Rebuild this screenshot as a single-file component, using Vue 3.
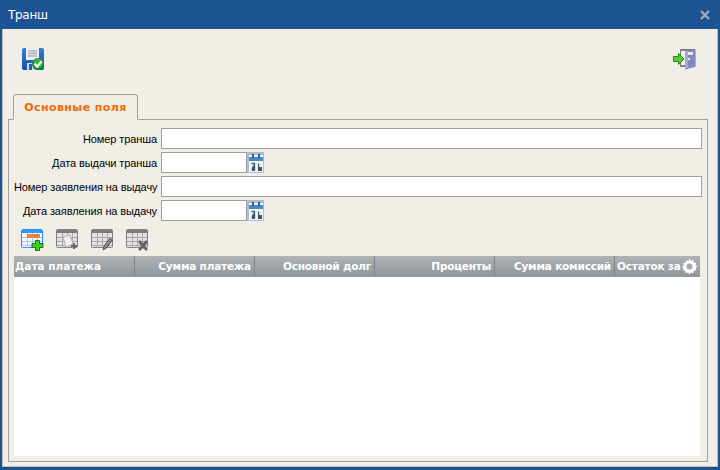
<template>
  <div class="window">
    <div class="titlebar">
      <span class="title">Транш</span>
      <svg class="close" width="10" height="10" viewBox="0 0 10 10">
        <path d="M1 1 L9 9 M9 1 L1 9" stroke="#a3adb9" stroke-width="2.2" fill="none" />
      </svg>
    </div>
    <div class="body">
      <div class="toolbar">
        <svg width="22" height="22" viewBox="0 0 22 22">
          <defs>
            <linearGradient id="disk" x1="0" y1="0" x2="0" y2="1">
              <stop offset="0" stop-color="#2f7fdc" />
              <stop offset="1" stop-color="#174f9f" />
            </linearGradient>
          </defs>
          <rect x="0" y="0" width="22" height="22" rx="2" fill="url(#disk)" />
          <rect x="4" y="0" width="13" height="12" fill="#eceef1" />
          <path d="M6 3h9M6 5.500h9M6 8h9" stroke="#a9b0bb" stroke-width="1.300" />
          <rect x="5" y="15" width="9" height="7" fill="#cfd8e6" />
          <rect x="7" y="16" width="3" height="6" fill="#2a5da3" />
          <circle cx="16" cy="16" r="6" fill="#10862a" />
          <circle cx="16" cy="15.500" r="4.800" fill="#35b53f" />
          <path d="M12.600 15.800 L15.200 18.600 L19.600 13.200" stroke="#fff" stroke-width="2.200" fill="none" />
        </svg>
        <svg width="23" height="22" viewBox="0 0 23 22">
          <path d="M7.500 1.500h14.500v17H7.500z" fill="#8c8c94" stroke="#77777f" />
          <rect x="8" y="3" width="5" height="14" fill="#eef1f2" />
          <path d="M12 3.500 L22 1.500 V19 L12 21.500 Z" fill="#8587bf" />
          <path d="M12 3.500 L15 3 V19 L12 21 Z" fill="#a6a8d8" />
          <rect x="15" y="4" width="5" height="3" fill="#e6e8f6" />
          <rect x="15" y="10" width="2" height="2" fill="#e6e8f6" />
          <path d="M0.500 8.500h5V5.500l5.500 5.500-5.500 5.500v-3H0.500z" fill="#56c92e" stroke="#1b8a12" />
        </svg>
      </div>
      <div class="tabs">
        <div class="tab">Основные поля</div>
      </div>
      <div class="panel">
        <div class="form">
          <div v-for="f in fields" :key="f.label" class="row">
            <label>{{ f.label }}</label>
            <template v-if="f.date">
              <input class="input date" type="text" />
              <svg class="cal" width="17" height="21" viewBox="0 0 17 21">
                <rect width="17" height="21" fill="#a4bfe0" />
                <rect x="2" y="3" width="14" height="17" fill="#f4f6f8" />
                <rect x="2" y="5" width="14" height="4" fill="#3c8fc4" />
                <path d="M6 2v4M12 2v4" stroke="#6a4a6a" stroke-width="2" />
                <path d="M4.500 11.500h3v3h-2M7.500 14.500v3h-3M11.500 11.500v6" stroke="#4a5358" stroke-width="1.300" fill="none" />
                <rect x="5" y="15" width="3" height="4" fill="#4a5358" />
                <rect x="11" y="15" width="4" height="4" fill="#4a5358" />
              </svg>
            </template>
            <input v-else class="input wide" type="text" />
          </div>
        </div>
        <div class="grid-tools">
          <svg v-for="(t, i) in tools" :key="t" width="23" height="22" viewBox="0 0 23 22">
            <rect x="0.500" y="0.500" width="21" height="18" rx="1" :fill="i === 0 ? '#f4f8ff' : '#e2e2e2'" :stroke="i === 0 ? '#1e90ff' : '#808080'" />
            <rect x="1" y="1" width="20" height="3" :fill="i === 0 ? '#2a9df4' : '#7a7a7a'" />
            <path d="M1 8.500h20M1 12.500h20M1 16.500h20M6.500 4v15M11.500 4v15M16.500 4v15" :stroke="i === 0 ? '#a9c6ee' : '#a8a8a8'" stroke-width="1" />
            <template v-if="i === 0">
              <rect x="6" y="5" width="13" height="4" fill="#f6803c" />
              <path d="M14.500 11.500h4v3h3.500v4h-3.500v3h-4v-3H11v-4h3.500z" fill="#3ccf2a" stroke="#14780f" />
            </template>
            <template v-if="i === 1">
              <path d="M7 8l7-2 3 9-7 3z" fill="#f0f0f0" stroke="#b0b0b0" />
              <path d="M17 14h2v2h2v2h-2v2h-2v-2h-2v-2h2z" fill="#666" />
            </template>
            <template v-if="i === 2">
              <path d="M12 21l1-4 6-8 2.500 2-6 8z" fill="#888" stroke="#333" stroke-width="0.700" />
            </template>
            <path v-if="i === 3" d="M14 11l3 3 3-3 2 2-3 4 3 3-2 2-3-3-3 3-2-2 3-3-3-4z" fill="#666" />
          </svg>
        </div>
        <div class="grid">
          <div class="grid-head">
            <div v-for="c in columns" :key="c.title" class="col" :class="c.cls">{{ c.title }}</div>
            <svg class="gear" width="17" height="17" viewBox="0 0 17 17">
              <path d="M8.500 0.500l1.300 2.300 2.500-.8.400 2.600 2.600.4-.8 2.500 2.300 1-2.300 1.300.8 2.500-2.600.4-.4 2.600-2.500-.8-1.300 2.300-1.300-2.300-2.500.8-.4-2.600-2.600-.4.800-2.500L.500 9l2.300-1.300-.8-2.500 2.600-.4.400-2.600 2.500.8z" fill="#fff" />
              <circle cx="8.500" cy="8.500" r="5.500" fill="#fff" />
              <circle cx="8.500" cy="8.500" r="3" fill="#a2a8ac" />
            </svg>
          </div>
          <div class="grid-rows"></div>
        </div>
      </div>
    </div>
  </div>
</template>

<script setup>
const fields = [
  { label: 'Номер транша', date: false },
  { label: 'Дата выдачи транша', date: true },
  { label: 'Номер заявления на выдачу', date: false },
  { label: 'Дата заявления на выдачу', date: true },
];

const tools = ['add', 'copy', 'edit', 'delete'];

const columns = [
  { title: 'Дата платежа', cls: 'first' },
  { title: 'Сумма платежа', cls: '' },
  { title: 'Основной долг', cls: '' },
  { title: 'Проценты', cls: '' },
  { title: 'Сумма комиссий', cls: '' },
  { title: 'Остаток за', cls: 'last' },
];
</script>

<style>
html, body {
  margin: 0;
  background: #1d5392;
}
</style>

<style scoped>
.window {
  width: 720px;
  height: 470px;
  display: flex;
  flex-direction: column;
  box-sizing: border-box;
  background: #1d5392;
  font-family: "Liberation Sans", sans-serif;
  font-size: 11px;
  letter-spacing: -0.100px;
  color: #000;
}

.titlebar {
  height: 29px;
  flex: none;
  display: flex;
  align-items: center;
  justify-content: space-between;
  padding: 0 10px 0 8px;
  color: #fff;
}

.title {
  font-family: "DejaVu Sans", sans-serif;
  font-size: 12px;
  letter-spacing: -0.300px;
}

.body {
  flex: 1;
  margin: 0 2px 3px;
  border-left: 1px solid #c4c4c0;
  border-right: 1px solid #c4c4c0;
  border-bottom: 1px solid #c4c4c0;
  background: #f1eee7;
  display: flex;
  flex-direction: column;
  padding: 0 9px 4px 5px;
}

.toolbar {
  height: 65px;
  flex: none;
  display: flex;
  justify-content: space-between;
  align-items: flex-start;
  padding: 19px 12px 0 14px;
  box-sizing: border-box;
}

.tabs {
  display: flex;
  padding-left: 5px;
  margin-bottom: -1px;
  position: relative;
  flex: none;
}

.tab {
  width: 125px;
  height: 26px;
  box-sizing: border-box;
  border: 1px solid #a0a09c;
  border-bottom: 1px solid #f1eee7;
  border-radius: 4px 4px 0 0;
  background: #f1eee7;
  color: #f26a00;
  font-family: "DejaVu Sans", sans-serif;
  font-size: 11px;
  font-weight: bold;
  text-align: center;
  line-height: 25px;
  letter-spacing: 0.400px;
}

.panel {
  flex: 1;
  border: 1px solid #a0a09c;
  display: flex;
  flex-direction: column;
  padding: 8px 5px 5px;
  min-height: 0;
}

.form {
  display: flex;
  flex-direction: column;
  gap: 3px;
}

.row {
  display: flex;
  align-items: center;
  height: 21px;
}

.row label {
  width: 143px;
  margin-right: 4px;
  text-align: right;
  white-space: nowrap;
}

.input {
  height: 21px;
  box-sizing: border-box;
  border: 1px solid #a0a09c;
  background: #fff;
  padding: 0 2px;
  margin: 0;
  outline: none;
}

.wide {
  width: 541px;
}

.date {
  width: 86px;
}

.cal {
  display: block;
}

.grid-tools {
  display: flex;
  gap: 12px;
  padding: 8px 0 0 7px;
  height: 27px;
  flex: none;
}

.grid {
  flex: 1;
  display: flex;
  flex-direction: column;
  min-height: 0;
  width: 686px;
}

.grid-head {
  height: 21px;
  flex: none;
  display: flex;
  position: relative;
  background: linear-gradient(#aeb3b7, #8f9599);
  color: #fff;
  font-family: "DejaVu Sans", sans-serif;
  font-size: 10.500px;
  font-weight: bold;
  letter-spacing: -0.200px;
  white-space: nowrap;
}

.col {
  width: 120px;
  box-sizing: border-box;
  border-right: 1px solid #7f8488;
  padding: 0 3px 0 2px;
  line-height: 21px;
  text-align: right;
  overflow: hidden;
}

.col.first {
  width: 121px;
  text-align: left;
  padding-left: 1px;
  letter-spacing: 0;
}

.col.last {
  width: 85px;
  border-right: none;
  text-align: left;
}

.gear {
  position: absolute;
  right: 2px;
  top: 2px;
}

.grid-rows {
  flex: 1;
  background: #fff;
}
</style>
